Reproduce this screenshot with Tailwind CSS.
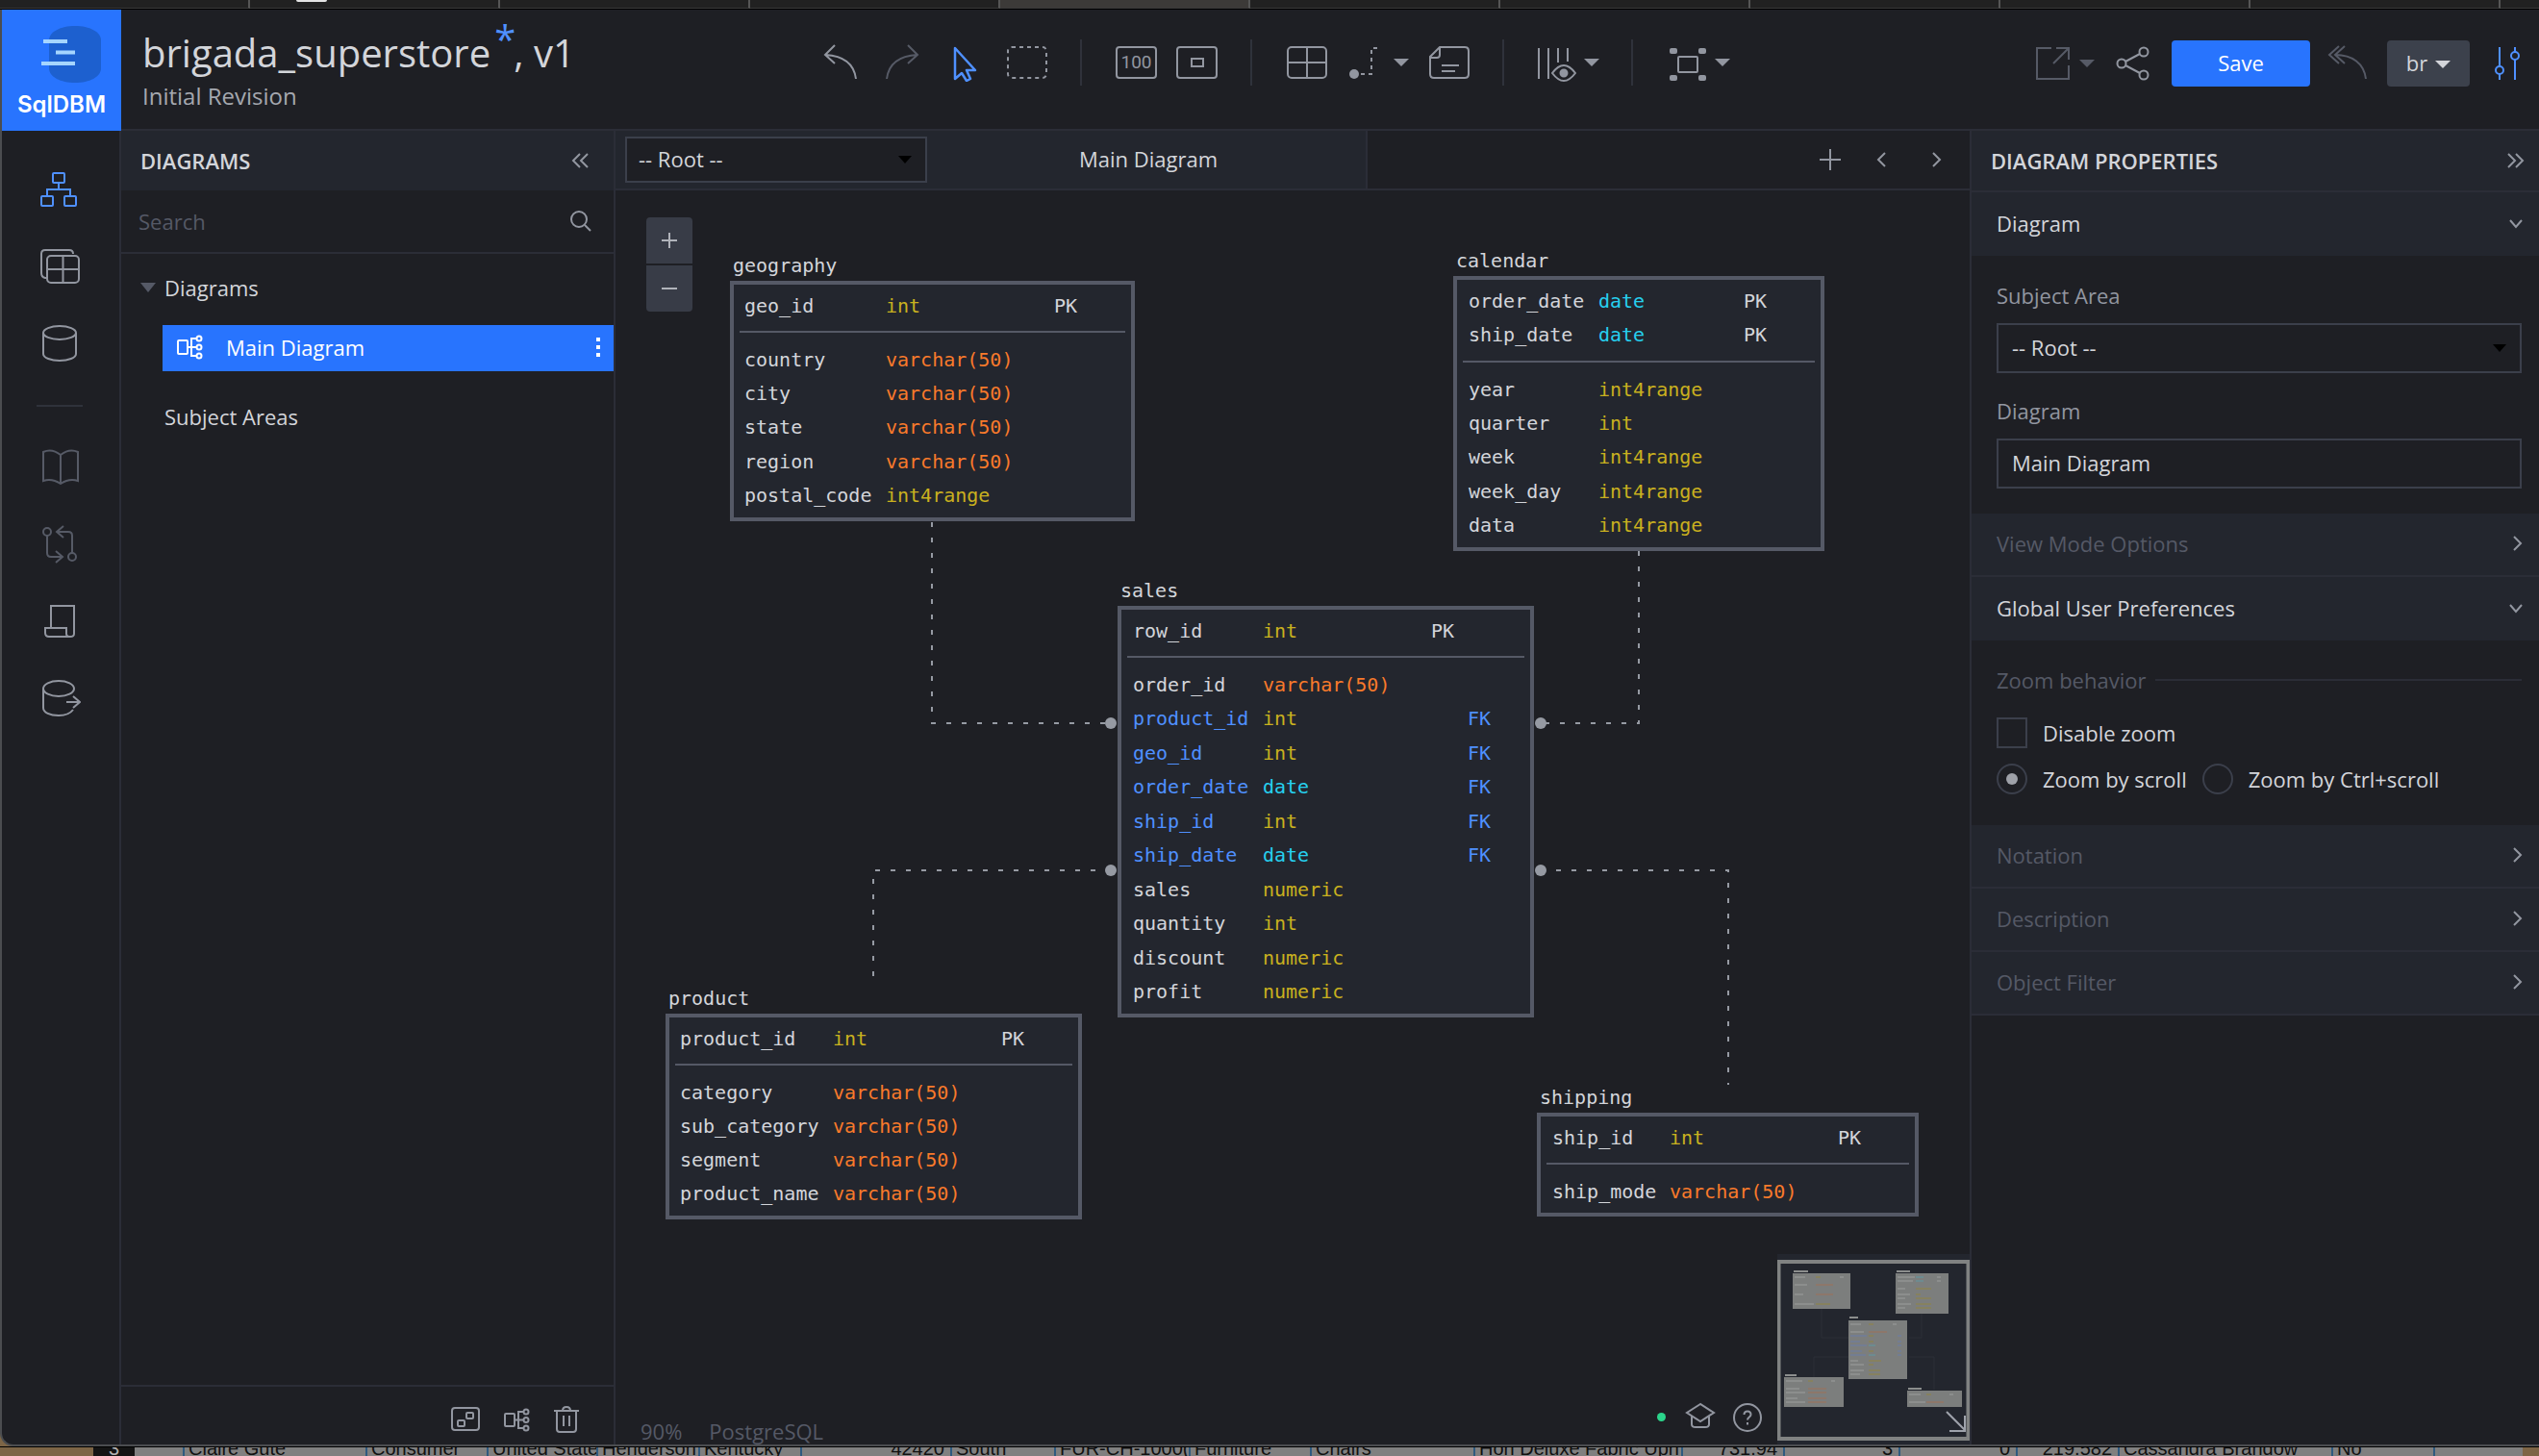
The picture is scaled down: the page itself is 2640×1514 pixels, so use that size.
<!DOCTYPE html>
<html lang="en">
<head>
<meta charset="utf-8">
<title>brigada_superstore - SqlDBM</title>
<script src="https://cdn.jsdelivr.net/npm/@tailwindcss/browser@4"></script>
</head>
<body class="bg-[#7d6546] text-[#d3d5da] font-['Open_Sans',sans-serif] text-[22px] leading-[30px]">
<div class="flex h-screen flex-col overflow-hidden">

  <!-- Browser tab edge -->
  <div class="flex h-[10px] shrink-0 overflow-hidden border-b border-black bg-[#212121]">
    <div class="w-[260px] shrink-0 border-r-2 border-b border-r-[#555] border-b-[#3a3a3a]"></div>
    <div class="w-[260px] shrink-0 border-r-2 border-b border-r-[#555] border-b-[#3a3a3a] pl-[48px]"><div class="h-[2px] w-8 rounded-b bg-[#e4e4e4]"></div></div>
    <div class="w-[260px] shrink-0 border-r-2 border-b border-r-[#555] border-b-[#3a3a3a]"></div>
    <div class="w-[260px] shrink-0 border-r-2 border-b border-r-[#555] border-b-[#3a3a3a]"></div>
    <div class="w-[260px] shrink-0 border-r-2 border-b border-r-[#555] border-b-[#3a3a3a] bg-[#3c3a38]"></div>
    <div class="w-[260px] shrink-0 border-r-2 border-b border-r-[#555] border-b-[#3a3a3a]"></div>
    <div class="w-[260px] shrink-0 border-r-2 border-b border-r-[#555] border-b-[#3a3a3a]"></div>
    <div class="w-[260px] shrink-0 border-r-2 border-b border-r-[#555] border-b-[#3a3a3a]"></div>
    <div class="w-[260px] shrink-0 border-r-2 border-b border-r-[#555] border-b-[#3a3a3a]"></div>
    <div class="w-[260px] shrink-0 border-r-2 border-b border-r-[#555] border-b-[#3a3a3a]"></div>
    <div class="flex-1 border-b border-b-[#3a3a3a]"></div>
  </div>

  <div class="flex min-h-0 flex-1 flex-col overflow-hidden rounded-bl-[14px] border-b-2 border-l-2 border-[#4b4d50] bg-[#1e1f24]">

    <!-- Header -->
    <header class="flex h-[126px] shrink-0">
      <a href="#" class="flex w-[124px] shrink-0 flex-col items-center bg-[#2874fe] text-white">
        <svg class="h-[84px] w-[124px]" viewBox="0 0 124 84" fill="none"><path d="M49 32c0-9 12-15 27-15s27 6 27 15v29c0 9-12 15-27 15s-27-6-27-15z" fill="#1d60cf"/><path d="M43 33h25M56 44.500h20M41 56h35" stroke="#a5d5ff" stroke-width="4"/></svg>
        <span class="font-['Inter',sans-serif] text-[24px] leading-[30px] font-semibold">SqlDBM</span>
      </a>
      <div class="flex min-w-0 flex-1 items-start border-b-2 border-[#2b2d37]">
        <div class="w-[726px] shrink-0 pt-4 pl-[22px]">
          <h1 class="text-[40px] leading-[58px] whitespace-nowrap">brigada_superstore<sup class="relative -top-[14px] -mr-[2px] ml-[4px] text-[40px] leading-none text-[#4f90ff]">*</sup>, v1</h1>
          <p class="text-[24px] leading-[32px] text-[#a5a8af]">Initial Revision</p>
        </div>
        <div class="flex h-[110px] items-center text-[#9296a0]">
          <button aria-label="Undo" class="mr-[26px]"><svg class="h-10 w-10" viewBox="0 0 40 40" fill="none" stroke="currentColor" stroke-width="2"><path d="M16 2 6 12 16 21M6 12c18 1 30 9 32 25"/></svg></button>
          <button aria-label="Redo" class="mr-[30px] text-[#565a66]"><svg class="h-10 w-10" viewBox="0 0 40 40" fill="none" stroke="currentColor" stroke-width="2"><path d="M26 2 36 12 26 21M36 12C18 13 6 21 4 37"/></svg></button>
          <button aria-label="Pointer" class="mr-[26px] text-[#4f90ff]"><svg class="h-10 w-8" viewBox="0 0 32 40" fill="none" stroke="currentColor" stroke-width="2.500" stroke-linejoin="round"><path d="M5 5v32l7-6 5 8 4-2-4-9h9z"/></svg></button>
          <button aria-label="Select area" class="mr-[33px]"><svg class="h-10 w-[44px]" viewBox="0 0 44 40" fill="none" stroke="currentColor" stroke-width="2" stroke-dasharray="4 4"><rect x="2" y="4" width="40" height="32" rx="4"/></svg></button>
          <span class="mr-[35px] h-12 w-[2px] bg-[#2f323b]"></span>
          <button aria-label="Zoom to 100" class="mr-5 flex h-[34px] w-[43px] items-center justify-center rounded-[4px] border-2 border-current font-['Roboto',sans-serif] text-[19px]">100</button>
          <button aria-label="Fit to screen" class="mr-[34px] flex h-[34px] w-[43px] items-center justify-center rounded-[4px] border-2 border-current"><span class="h-[10px] w-[14px] border-2 border-current"></span></button>
          <span class="mr-[35px] h-12 w-[2px] bg-[#2f323b]"></span>
          <button aria-label="Add table" class="mr-[20px]"><svg class="h-10 w-[44px]" viewBox="0 0 44 40" fill="none" stroke="currentColor" stroke-width="2"><rect x="2" y="4" width="40" height="32" rx="4"/><path d="M22 4v32M2 20h40"/></svg></button>
          <button aria-label="Add relationship" class="mr-5 flex items-center gap-3"><svg class="h-10 w-9" viewBox="0 0 36 40" fill="none"><circle cx="7" cy="32" r="5" fill="currentColor"/><path d="M14 32h11V5h10" stroke="currentColor" stroke-width="2" stroke-dasharray="4 4"/></svg><svg class="h-2 w-4" viewBox="0 0 16 8" fill="currentColor"><path d="M0 0h16l-8 8z"/></svg></button>
          <button aria-label="Add note" class="mr-[33px]"><svg class="h-10 w-[44px]" viewBox="0 0 44 40" fill="none" stroke="currentColor" stroke-width="2"><path d="M12 4h26q4 0 4 4v24q0 4-4 4H6q-4 0-4-4V14zM12 4v8q0 3-3 3H2M14 23h18M14 29h14"/></svg></button>
          <span class="mr-[35px] h-12 w-[2px] bg-[#2f323b]"></span>
          <button aria-label="View mode" class="mr-[33px] flex items-center gap-2"><svg class="h-10 w-10" viewBox="0 0 40 40" fill="none" stroke="currentColor" stroke-width="2"><path d="M1 5v32M11 5v32M21 5v15M31 5v14"/><path d="M15 31q6-8 12-8t12 8q-6 8-12 8t-12-8z"/><circle cx="27" cy="31" r="3.500" fill="currentColor"/></svg><svg class="h-2 w-4" viewBox="0 0 16 8" fill="currentColor"><path d="M0 0h16l-8 8z"/></svg></button>
          <span class="mr-[37px] h-12 w-[2px] bg-[#2f323b]"></span>
          <button aria-label="Layout" class="flex items-center gap-2"><svg class="h-10 w-10" viewBox="0 0 40 40" fill="none" stroke="currentColor" stroke-width="2"><rect x="10" y="14" width="20" height="16" rx="1"/><g fill="currentColor" stroke="none"><rect x="1" y="5" width="8" height="6" rx="2"/><rect x="31" y="5" width="8" height="6" rx="2"/><rect x="1" y="33" width="8" height="6" rx="2"/><rect x="31" y="33" width="8" height="6" rx="2"/></g></svg><svg class="h-2 w-4" viewBox="0 0 16 8" fill="currentColor"><path d="M0 0h16l-8 8z"/></svg></button>
        </div>
        <div class="ml-auto flex h-[112px] shrink-0 items-center pr-[18px] text-[#9296a0]">
          <button aria-label="Export" class="mr-[22px] flex items-center gap-2 text-[#565a66]"><svg class="h-10 w-[38px]" viewBox="0 0 38 40" fill="none" stroke="currentColor" stroke-width="2"><path d="M17 4H2v32h33V22M22 4h13v12M35 4 19 20"/></svg><svg class="h-2 w-4" viewBox="0 0 16 8" fill="currentColor"><path d="M0 0h16l-8 8z"/></svg></button>
          <button aria-label="Share" class="mr-[22px]"><svg class="h-10 w-9" viewBox="0 0 36 40" fill="none" stroke="currentColor" stroke-width="2"><circle cx="6" cy="20" r="4.500"/><circle cx="29" cy="8" r="4.500"/><circle cx="29" cy="32" r="4.500"/><path d="m10 18 15-8M10 22l15 8"/></svg></button>
          <button class="mr-[18px] h-12 w-[144px] rounded-[4px] bg-[#2874fe] pb-[2px] font-medium text-white">Save</button>
          <button aria-label="Revert" class="mr-[20px] text-[#565a66]"><svg class="h-10 w-[42px]" viewBox="0 0 42 40" fill="none" stroke="currentColor" stroke-width="2"><path d="M12 2 2 11l10 9M18 2 8 11l10 9M8 11c18 0 30 9 32 25"/></svg></button>
          <button class="mr-[24px] flex h-12 w-[86px] items-center justify-center gap-2 rounded-[4px] bg-[#3c414c] pb-[2px] text-[#d3d5da]">br <svg class="mt-1 h-2 w-4" viewBox="0 0 16 8" fill="currentColor"><path d="M0 0h16l-8 8z"/></svg></button>
          <button aria-label="Settings" class="text-[#4f90ff]"><svg class="h-10 w-[30px]" viewBox="0 0 30 40" fill="none" stroke="currentColor" stroke-width="2"><path d="M7 3v20M7 31v6M23 3v5M23 16v21"/><circle cx="7" cy="27" r="4"/><circle cx="23" cy="12" r="4"/></svg></button>
        </div>
      </div>
    </header>

    <div class="flex min-h-0 flex-1">

      <!-- Icon rail -->
      <nav class="flex w-[124px] shrink-0 flex-col items-center border-r-2 border-[#2b2d37] pt-[21px] pr-[2px] text-[#9296a0]">
        <button aria-label="Diagrams" class="flex h-20 items-center text-[#4f90ff]"><svg class="h-10 w-11" viewBox="0 0 44 40" fill="none" stroke="currentColor" stroke-width="2"><rect x="15" y="3" width="12" height="10" rx="1"/><rect x="3" y="27" width="12" height="10" rx="1"/><rect x="27" y="27" width="12" height="10" rx="1"/><path d="M21 13v7M9 27v-7h24v7"/></svg></button>
        <button aria-label="Tables" class="flex h-20 items-center"><svg class="h-10 w-11" viewBox="0 0 44 40" fill="none" stroke="currentColor" stroke-width="2"><path d="M9 32H7q-4-1-4-5V7q0-4 4-4h25q4 0 4 4"/><rect x="9" y="9" width="33" height="28" rx="4"/><path d="M25.500 9v28M9 23h33"/></svg></button>
        <button aria-label="Database" class="flex h-20 items-center"><svg class="h-10 w-11" viewBox="0 0 44 40" fill="none" stroke="currentColor" stroke-width="2"><ellipse cx="22" cy="9" rx="17" ry="7"/><path d="M5 9v22c0 4 8 7 17 7s17-3 17-7V9"/></svg></button>
        <span class="mt-6 mb-[23px] h-[2px] w-12 shrink-0 bg-[#2f323b]"></span>
        <button aria-label="Documentation" class="flex h-20 items-center text-[#565a66]"><svg class="h-10 w-11" viewBox="0 0 44 40" fill="none" stroke="currentColor" stroke-width="2"><path d="M23 7Q14 0 5 4v30q9-3 18 3 9-6 18-3V4q-9-4-18 3zv30"/></svg></button>
        <button aria-label="Compare" class="flex h-20 items-center text-[#565a66]"><svg class="h-10 w-11" viewBox="0 0 44 40" fill="none" stroke="currentColor" stroke-width="2"><circle cx="9" cy="7" r="4"/><circle cx="35" cy="33" r="4"/><path d="M9 11v18q0 4 4 4h12M18 27l7 6-7 6M35 29V11q0-4-4-4H19M26 1l-7 6 7 6"/></svg></button>
        <button aria-label="Scripts" class="flex h-20 items-center"><svg class="h-10 w-11" viewBox="0 0 44 40" fill="none" stroke="currentColor" stroke-width="2"><path d="M13 27V4h24v29q0 3-4 3H11q-4 0-4-4v-5h22v6q0 3 4 3"/></svg></button>
        <button aria-label="Export database" class="flex h-20 items-center"><svg class="h-10 w-11" viewBox="0 0 44 40" fill="none" stroke="currentColor" stroke-width="2"><ellipse cx="21" cy="10" rx="16" ry="8"/><path d="M5 10v20c0 5 7 8 16 8 7 0 12-2 15-6M29 24h14M36 18l7 6-7 6"/></svg></button>
      </nav>

      <!-- Diagrams panel -->
      <aside class="flex w-[514px] shrink-0 flex-col border-r-2 border-[#2b2d37]">
        <div class="flex h-[62px] shrink-0 items-center justify-between bg-[#23262e] pr-6 pl-5">
          <h2 class="font-semibold">DIAGRAMS</h2>
          <button aria-label="Collapse panel" class="text-[#9296a0]"><svg class="h-5 w-5" viewBox="0 0 20 20" fill="none" stroke="currentColor" stroke-width="2"><path d="m9 3-7 7 7 7M17 3l-7 7 7 7"/></svg></button>
        </div>
        <label class="flex h-[66px] shrink-0 items-center border-b-2 border-[#2b2d37] pr-[22px] pl-[18px] text-[#9296a0]">
          <input type="text" aria-label="Search" placeholder="Search" class="min-w-0 flex-1 bg-transparent placeholder:text-[#555966]">
          <svg class="h-6 w-6" viewBox="0 0 24 24" fill="none" stroke="currentColor" stroke-width="2"><circle cx="10" cy="10" r="8"/><path d="m16 16 6 6"/></svg>
        </label>
        <div class="flex min-h-0 flex-1 flex-col pt-[10px]">
          <div class="flex h-[50px] items-center gap-[9px] pl-5"><svg class="h-[10px] w-4" viewBox="0 0 16 10" fill="#555966"><path d="M0 0h16l-8 10z"/></svg>Diagrams</div>
          <a href="#" class="mt-[14px] ml-[43px] flex h-12 items-center bg-[#2874fe] pr-3 pb-[2px] pl-[14px] text-white">
            <svg class="mr-6 h-7 w-7" viewBox="0 0 28 28" fill="none" stroke="currentColor" stroke-width="2"><rect x="2" y="7" width="10" height="14" rx="1"/><path d="M12 14h9M21 5h-5v18h5"/><circle cx="24" cy="5" r="2.500"/><circle cx="24" cy="14" r="2.500"/><circle cx="24" cy="23" r="2.500"/></svg>
            Main Diagram
            <svg class="ml-auto h-6 w-2" viewBox="0 0 8 24" fill="currentColor"><path d="M2 2h4v4H2zM2 10h4v4H2zM2 18h4v4H2z"/></svg>
          </a>
          <div class="mt-[22px] flex h-[50px] items-center pl-[45px]">Subject Areas</div>
        </div>
        <div class="flex h-[62px] shrink-0 items-center justify-end gap-[24px] border-t-2 border-[#2b2d37] pt-2 pr-[35px] text-[#9296a0]">
          <button aria-label="Show on diagram"><svg class="h-8 w-[30px]" viewBox="0 0 30 32" fill="none" stroke="currentColor" stroke-width="2"><rect x="1" y="4" width="28" height="23" rx="3"/><rect x="7" y="17" width="7" height="6" rx="1"/><rect x="16" y="9" width="7" height="6" rx="1"/></svg></button>
          <button aria-label="Add diagram"><svg class="h-8 w-7" viewBox="0 0 28 32" fill="none" stroke="currentColor" stroke-width="2"><rect x="2" y="10" width="10" height="13" rx="1"/><path d="M12 16.500h9M21 8h-5v17h5"/><circle cx="24" cy="8" r="2.500"/><circle cx="24" cy="16.500" r="2.500"/><circle cx="24" cy="25" r="2.500"/></svg></button>
          <button aria-label="Delete"><svg class="h-8 w-7" viewBox="0 0 28 32" fill="none" stroke="currentColor" stroke-width="2"><path d="M1 7h26M4 7v19q0 3 3 3h14q3 0 3-3V7M10 7q0-4 4-4t4 4M11 12v11M17 12v11"/></svg></button>
        </div>
      </aside>

      <!-- Diagram workspace -->
      <main class="flex min-w-0 flex-1 flex-col">
        <div class="flex h-[62px] shrink-0 items-center border-b-2 border-[#2b2d37]">
          <div class="flex h-full w-[782px] items-center border-r-2 border-[#2b2d37] bg-[#23262e] pl-[10px]">
            <div class="relative w-[314px] shrink-0">
              <select aria-label="Subject area" class="block h-12 w-full appearance-none border-2 border-[#3b3f4b] bg-[#1e1f24] pb-[2px] pl-3"><option>-- Root --</option></select>
              <svg class="pointer-events-none absolute top-5 right-4 h-2 w-[14px]" viewBox="0 0 14 8"><path d="M0 0h14l-7 8z"/></svg>
            </div>
            <a href="#" class="flex-1 pb-[2px] pl-1 text-center">Main Diagram</a>
          </div>
          <div class="ml-auto flex items-center pr-[24px] text-[#9296a0]">
            <button aria-label="Add diagram tab" class="mr-[31px]"><svg class="h-6 w-6" viewBox="0 0 24 24" fill="none" stroke="currentColor" stroke-width="2"><path d="M12 1v22M1 12h22"/></svg></button>
            <button aria-label="Previous tab" class="mr-[38px]"><svg class="h-5 w-5" viewBox="0 0 20 20" fill="none" stroke="currentColor" stroke-width="2"><path d="m14 3-7 7 7 7"/></svg></button>
            <button aria-label="Next tab"><svg class="h-5 w-5" viewBox="0 0 20 20" fill="none" stroke="currentColor" stroke-width="2"><path d="m6 3 7 7-7 7"/></svg></button>
          </div>
        </div>

        <div class="relative min-h-0 flex-1 overflow-hidden">
          <svg class="absolute inset-0 h-full w-full" fill="none" stroke="#969aa3" stroke-width="2">
            <g stroke-dasharray="5 11"><path d="M329 345V554H515"/><path d="M1064 375V554H962"/><path d="M515 707H268V824"/><path d="M962 707H1157V930"/></g>
            <g fill="#969aa3" stroke="none"><circle cx="515" cy="554" r="6"/><circle cx="962" cy="554" r="6"/><circle cx="515" cy="707" r="6"/><circle cx="962" cy="707" r="6"/></g>
          </svg>

          <div class="absolute top-[28px] left-[32px] flex w-12 flex-col gap-[2px] text-[#b0b3ba]">
            <button aria-label="Zoom in" class="flex h-12 items-center justify-center rounded-t-[4px] bg-[#383c47]"><svg class="h-5 w-5" viewBox="0 0 20 20" fill="none" stroke="currentColor" stroke-width="2"><path d="M10 2v16M2 10h16"/></svg></button>
            <button aria-label="Zoom out" class="flex h-12 items-center justify-center rounded-b-[4px] bg-[#383c47]"><svg class="h-5 w-5" viewBox="0 0 20 20" fill="none" stroke="currentColor" stroke-width="2"><path d="M2 10h16"/></svg></button>
          </div>

          <section class="absolute top-[64px] left-[119px] w-[421px] font-['DejaVu_Sans_Mono',monospace] text-[20px] leading-5">
            <h3 class="h-[30px] pl-[3px] leading-[28px]">geography</h3>
            <div class="border-4 border-[#555966] bg-[#23262e] px-[6px] pt-1 pb-[5px]">
              <table class="h-[35px] w-full table-fixed text-left"><colgroup><col class="w-[152px]"><col class="w-[175px]"><col></colgroup>
                <tr><td class="pl-[5px]">geo_id</td><td class="text-[#c9b01f]">int</td><td>PK</td></tr>
              </table>
              <hr class="mt-[9px] mb-[10px] border-t-2 border-[#555966]">
              <table class="h-[177px] w-full table-fixed text-left"><colgroup><col class="w-[152px]"><col class="w-[175px]"><col></colgroup>
                <tr><td class="pl-[5px]">country</td><td class="text-[#f97a2b]">varchar(50)</td><td></td></tr>
                <tr><td class="pl-[5px]">city</td><td class="text-[#f97a2b]">varchar(50)</td><td></td></tr>
                <tr><td class="pl-[5px]">state</td><td class="text-[#f97a2b]">varchar(50)</td><td></td></tr>
                <tr><td class="pl-[5px]">region</td><td class="text-[#f97a2b]">varchar(50)</td><td></td></tr>
                <tr><td class="pl-[5px]">postal_code</td><td class="text-[#c9b01f]">int4range</td><td></td></tr>
              </table>
            </div>
          </section>

          <section class="absolute top-[59px] left-[871px] w-[386px] font-['DejaVu_Sans_Mono',monospace] text-[20px] leading-5">
            <h3 class="h-[30px] pl-[3px] leading-[28px]">calendar</h3>
            <div class="border-4 border-[#555966] bg-[#23262e] px-[6px] pt-1 pb-[5px]">
              <table class="h-[71px] w-full table-fixed text-left"><colgroup><col class="w-[141px]"><col class="w-[151px]"><col></colgroup>
                <tr><td class="pl-[6px]">order_date</td><td class="text-[#26d0ee]">date</td><td>PK</td></tr>
                <tr><td class="pl-[6px]">ship_date</td><td class="text-[#26d0ee]">date</td><td>PK</td></tr>
              </table>
              <hr class="mt-[9px] mb-[10px] border-t-2 border-[#555966]">
              <table class="h-[177px] w-full table-fixed text-left"><colgroup><col class="w-[141px]"><col class="w-[151px]"><col></colgroup>
                <tr><td class="pl-[6px]">year</td><td class="text-[#c9b01f]">int4range</td><td></td></tr>
                <tr><td class="pl-[6px]">quarter</td><td class="text-[#c9b01f]">int</td><td></td></tr>
                <tr><td class="pl-[6px]">week</td><td class="text-[#c9b01f]">int4range</td><td></td></tr>
                <tr><td class="pl-[6px]">week_day</td><td class="text-[#c9b01f]">int4range</td><td></td></tr>
                <tr><td class="pl-[6px]">data</td><td class="text-[#c9b01f]">int4range</td><td></td></tr>
              </table>
            </div>
          </section>

          <section class="absolute top-[402px] left-[522px] w-[433px] font-['DejaVu_Sans_Mono',monospace] text-[20px] leading-5">
            <h3 class="h-[30px] pl-[3px] leading-[28px]">sales</h3>
            <div class="border-4 border-[#555966] bg-[#23262e] px-[6px] pt-1 pb-[5px]">
              <table class="h-[35px] w-full table-fixed text-left"><colgroup><col class="w-[141px]"><col class="w-[175px]"><col></colgroup>
                <tr><td class="pl-[6px]">row_id</td><td class="text-[#c9b01f]">int</td><td>PK</td></tr>
              </table>
              <hr class="mt-[9px] mb-[10px] border-t-2 border-[#555966]">
              <table class="h-[355px] w-full table-fixed text-left"><colgroup><col class="w-[141px]"><col class="w-[213px]"><col></colgroup>
                <tr><td class="pl-[6px]">order_id</td><td class="text-[#f97a2b]">varchar(50)</td><td></td></tr>
                <tr class="text-[#4f90ff]"><td class="pl-[6px]">product_id</td><td class="text-[#c9b01f]">int</td><td>FK</td></tr>
                <tr class="text-[#4f90ff]"><td class="pl-[6px]">geo_id</td><td class="text-[#c9b01f]">int</td><td>FK</td></tr>
                <tr class="text-[#4f90ff]"><td class="pl-[6px]">order_date</td><td class="text-[#26d0ee]">date</td><td>FK</td></tr>
                <tr class="text-[#4f90ff]"><td class="pl-[6px]">ship_id</td><td class="text-[#c9b01f]">int</td><td>FK</td></tr>
                <tr class="text-[#4f90ff]"><td class="pl-[6px]">ship_date</td><td class="text-[#26d0ee]">date</td><td>FK</td></tr>
                <tr><td class="pl-[6px]">sales</td><td class="text-[#c9b01f]">numeric</td><td></td></tr>
                <tr><td class="pl-[6px]">quantity</td><td class="text-[#c9b01f]">int</td><td></td></tr>
                <tr><td class="pl-[6px]">discount</td><td class="text-[#c9b01f]">numeric</td><td></td></tr>
                <tr><td class="pl-[6px]">profit</td><td class="text-[#c9b01f]">numeric</td><td></td></tr>
              </table>
            </div>
          </section>

          <section class="absolute top-[826px] left-[52px] w-[433px] font-['DejaVu_Sans_Mono',monospace] text-[20px] leading-5">
            <h3 class="h-[30px] pl-[3px] leading-[28px]">product</h3>
            <div class="border-4 border-[#555966] bg-[#23262e] px-[6px] pt-1 pb-[5px]">
              <table class="h-[35px] w-full table-fixed text-left"><colgroup><col class="w-[164px]"><col class="w-[175px]"><col></colgroup>
                <tr><td class="pl-[5px]">product_id</td><td class="text-[#c9b01f]">int</td><td>PK</td></tr>
              </table>
              <hr class="mt-[9px] mb-[10px] border-t-2 border-[#555966]">
              <table class="h-[141px] w-full table-fixed text-left"><colgroup><col class="w-[164px]"><col class="w-[175px]"><col></colgroup>
                <tr><td class="pl-[5px]">category</td><td class="text-[#f97a2b]">varchar(50)</td><td></td></tr>
                <tr><td class="pl-[5px]">sub_category</td><td class="text-[#f97a2b]">varchar(50)</td><td></td></tr>
                <tr><td class="pl-[5px]">segment</td><td class="text-[#f97a2b]">varchar(50)</td><td></td></tr>
                <tr><td class="pl-[5px]">product_name</td><td class="text-[#f97a2b]">varchar(50)</td><td></td></tr>
              </table>
            </div>
          </section>

          <section class="absolute top-[929px] left-[958px] w-[397px] font-['DejaVu_Sans_Mono',monospace] text-[20px] leading-5">
            <h3 class="h-[30px] pl-[3px] leading-[28px]">shipping</h3>
            <div class="border-4 border-[#555966] bg-[#23262e] px-[6px] pt-1 pb-[5px]">
              <table class="h-[35px] w-full table-fixed text-left"><colgroup><col class="w-[128px]"><col class="w-[175px]"><col></colgroup>
                <tr><td class="pl-[6px]">ship_id</td><td class="text-[#c9b01f]">int</td><td>PK</td></tr>
              </table>
              <hr class="mt-[9px] mb-[10px] border-t-2 border-[#555966]">
              <table class="h-[35px] w-full table-fixed text-left"><colgroup><col class="w-[128px]"><col class="w-[175px]"><col></colgroup>
                <tr><td class="pl-[6px]">ship_mode</td><td class="text-[#f97a2b]">varchar(50)</td><td></td></tr>
              </table>
            </div>
          </section>

          <div class="absolute bottom-0 left-[26px] flex h-7 gap-7 leading-7 text-[#555966]"><span>90%</span><span>PostgreSQL</span></div>

          <!-- Status icons and minimap -->
          <div class="absolute right-0 bottom-0 flex items-end text-[#9296a0]">
            <span class="mr-[20px] mb-6 h-[9px] w-[9px] rounded-full bg-[#2bd48b]"></span>
            <button aria-label="Learn" class="mr-[17px] mb-[12px]"><svg class="h-8 w-8" viewBox="0 0 32 32" fill="none" stroke="currentColor" stroke-width="2"><path d="M16 2 2 11l14 9 14-9zM7 14v9q0 3 4 3h10q4 0 4-3v-9"/></svg></button>
            <button aria-label="Help" class="mr-[15px] mb-[12px]"><svg class="h-8 w-8" viewBox="0 0 32 32" fill="none" stroke="currentColor" stroke-width="2"><circle cx="16" cy="16" r="14"/><path d="M12.500 13q0-3.500 3.500-3.500t3.500 3.500c0 2.500-3.500 2.500-3.500 5.500M16 21v2.500"/></svg></button>
            <div class="relative h-[198px] w-[200px] bg-[#23262e] pt-[6px] pb-1">
              <svg class="h-[188px] w-[200px]" viewBox="0 0 200 188" fill="none">
                <rect x="1.500" y="2" width="197" height="184" stroke="#808282" stroke-width="4"/>
                <path d="M46 51v30h28M150 56v25h-13M38 128v-27h36M137 101h26v34" stroke="#2c2f36"/>
                <g fill="#7c7e7d"><rect x="16" y="14" width="60" height="37"/><rect x="123" y="14" width="55" height="42"/><rect x="74" y="63" width="61" height="61"/><rect x="7" y="122" width="62" height="31"/><rect x="135" y="136" width="57" height="17"/></g>
                <path d="M17 12h15M124 12h14M75 60h9M8 120h12M136 134h14M18 18h11M65 18h4M18 26h13M18 36h9M18 46h20M125 18h18M166 18h4M125 22h16M166 22h4M125 30h8M125 36h13M125 40h8M125 46h14M125 50h8M76 67h11M120 67h4M76 75h14M76 105h8M76 109h14M76 115h14M76 119h10M9 126h17M56 126h4M9 134h14M9 138h20M9 144h12M9 148h20M137 140h12M179 140h4M137 148h17" stroke="#8c8e8d" stroke-width="2"/>
                <path d="M40 26h18M40 36h18M95 75h19M32 134h19M32 138h19M32 144h19M32 148h19M155 148h18" stroke="#8d776a" stroke-width="2"/>
                <path d="M40 18h5M40 46h15M144 30h16M144 36h5M144 40h16M144 46h16M144 50h16M95 67h5M95 79h5M95 85h5M95 95h5M95 105h13M95 109h5M95 115h12M95 119h12M32 126h5M155 140h5" stroke="#86815f" stroke-width="2"/>
                <path d="M144 18h8M144 22h8M95 89h7M95 99h7" stroke="#6d8b90" stroke-width="2"/>
                <path d="M76 79h17M76 85h10M76 89h17M76 95h12M76 99h16M125 79h4M125 85h4M125 89h4M125 95h4M125 99h4" stroke="#737d92" stroke-width="2"/>
                <path d="m176 158 19 19M195 162v16h-16" stroke="#9ea2ab" stroke-width="2"/>
              </svg>
            </div>
          </div>
        </div>
      </main>

      <!-- Properties panel -->
      <aside class="flex w-[592px] shrink-0 flex-col border-l-2 border-[#2b2d37]">
        <div class="flex h-16 shrink-0 items-center justify-between border-b-2 border-[#2b2d37] bg-[#23262e] pr-[15px] pl-5">
          <h2 class="font-semibold">DIAGRAM PROPERTIES</h2>
          <button aria-label="Collapse properties" class="text-[#9296a0]"><svg class="h-5 w-5" viewBox="0 0 20 20" fill="none" stroke="currentColor" stroke-width="2"><path d="m3 3 7 7-7 7M11 3l7 7-7 7"/></svg></button>
        </div>
        <button class="flex h-[66px] shrink-0 items-center justify-between bg-[#23262e] pr-[14px] pb-[3px] pl-[26px]">Diagram<svg class="h-5 w-5 text-[#9296a0]" viewBox="0 0 20 20" fill="none" stroke="currentColor" stroke-width="2"><path d="m4 7 6 7 6-7"/></svg></button>
        <div class="flex h-[268px] shrink-0 flex-col pt-[26px] pr-[18px] pl-[26px]">
          <label for="area" class="h-11 text-[#9296a0]">Subject Area</label>
          <div class="relative">
            <select id="area" class="block h-[52px] w-full appearance-none border-2 border-[#3b3f4b] bg-[#1e1f24] pb-[2px] pl-[14px]"><option>-- Root --</option></select>
            <svg class="pointer-events-none absolute top-[22px] right-4 h-2 w-[14px]" viewBox="0 0 14 8"><path d="M0 0h14l-7 8z"/></svg>
          </div>
          <label for="name" class="mt-6 h-11 text-[#9296a0]">Diagram</label>
          <input id="name" type="text" value="Main Diagram" class="h-[52px] w-full border-2 border-[#3b3f4b] bg-transparent px-[14px] pb-[2px]">
        </div>
        <button class="flex h-[66px] shrink-0 items-center justify-between border-b-2 border-[#2b2d37] bg-[#23262e] pr-[14px] pb-[2px] pl-[26px] text-[#555966]">View Mode Options<svg class="h-5 w-5 text-[#9296a0]" viewBox="0 0 20 20" fill="none" stroke="currentColor" stroke-width="2"><path d="m8 3 7 7-7 7"/></svg></button>
        <button class="flex h-[66px] shrink-0 items-center justify-between bg-[#23262e] pr-[14px] pb-[3px] pl-[26px]">Global User Preferences<svg class="h-5 w-5 text-[#9296a0]" viewBox="0 0 20 20" fill="none" stroke="currentColor" stroke-width="2"><path d="m4 7 6 7 6-7"/></svg></button>
        <fieldset class="h-[192px] shrink-0 pt-[26px] pr-[18px] pl-[26px]">
          <div class="flex items-center gap-[10px] text-[#555966]">Zoom behavior<span class="h-[2px] flex-1 bg-[#2b2d37]"></span></div>
          <label class="mt-[24px] flex h-8 items-center gap-4 leading-7"><input type="checkbox" class="h-8 w-8 appearance-none border-2 border-[#3b3f4b] checked:bg-[#9296a0]">Disable zoom</label>
          <div class="mt-4 flex gap-4">
            <label class="flex h-8 items-center gap-4"><input type="radio" name="zoom" checked class="h-8 w-8 appearance-none rounded-full border-2 border-[#3b3f4b] bg-clip-content p-2 checked:bg-[#9ea1a8]">Zoom by scroll</label>
            <label class="flex h-8 items-center gap-4"><input type="radio" name="zoom" class="h-8 w-8 appearance-none rounded-full border-2 border-[#3b3f4b] bg-clip-content p-2 checked:bg-[#9ea1a8]">Zoom by Ctrl+scroll</label>
          </div>
        </fieldset>
        <button class="flex h-[66px] shrink-0 items-center justify-between border-b-2 border-[#2b2d37] bg-[#23262e] pr-[14px] pb-[2px] pl-[26px] text-[#555966]">Notation<svg class="h-5 w-5 text-[#9296a0]" viewBox="0 0 20 20" fill="none" stroke="currentColor" stroke-width="2"><path d="m8 3 7 7-7 7"/></svg></button>
        <button class="flex h-[66px] shrink-0 items-center justify-between border-b-2 border-[#2b2d37] bg-[#23262e] pr-[14px] pb-[2px] pl-[26px] text-[#555966]">Description<svg class="h-5 w-5 text-[#9296a0]" viewBox="0 0 20 20" fill="none" stroke="currentColor" stroke-width="2"><path d="m8 3 7 7-7 7"/></svg></button>
        <button class="flex h-[66px] shrink-0 items-center justify-between border-b-2 border-[#2b2d37] bg-[#23262e] pr-[14px] pb-[2px] pl-[26px] text-[#555966]">Object Filter<svg class="h-5 w-5 text-[#9296a0]" viewBox="0 0 20 20" fill="none" stroke="currentColor" stroke-width="2"><path d="m8 3 7 7-7 7"/></svg></button>
      </aside>
    </div>
  </div>

  <!-- Spreadsheet behind the window -->
  <div class="flex h-[10px] shrink-0 items-start overflow-hidden border-t border-black pr-[17px] pl-[97px] font-['Liberation_Sans',sans-serif] text-[20px] leading-[22px] text-[#111]">
    <table class="-mt-[10px] w-full table-fixed bg-[#808080]">
      <colgroup><col class="w-[43px]"><col class="w-[51px]"><col class="w-[190px]"><col class="w-[126px]"><col class="w-[114px]"><col class="w-[106px]"><col class="w-[106px]"><col class="w-[156px]"><col class="w-[108px]"><col class="w-[140px]"><col class="w-[126px]"><col class="w-[170px]"><col class="w-[216px]"><col class="w-[106px]"><col class="w-[120px]"><col class="w-[122px]"><col class="w-[106px]"><col class="w-[222px]"><col class="w-[106px]"><col></colgroup>
      <tr class="whitespace-nowrap">
        <td class="bg-[#141414] text-center text-[#b0b0b0]">3</td>
        <td class="border-r-2 border-[#2f5a80]"></td>
        <td class="border-r-2 border-[#2f5a80] pl-1">Claire Gute</td>
        <td class="border-r-2 border-[#2f5a80] pl-1">Consumer</td>
        <td class="overflow-hidden border-r-2 border-[#2f5a80] pl-1">United State</td>
        <td class="overflow-hidden border-r-2 border-[#2f5a80] pl-1">Henderson</td>
        <td class="overflow-hidden border-r-2 border-[#2f5a80] pl-1">Kentucky</td>
        <td class="border-r-2 border-[#2f5a80] pr-[6px] text-right">42420</td>
        <td class="border-r-2 border-[#2f5a80] pl-1">South</td>
        <td class="overflow-hidden border-r-2 border-[#2f5a80] pl-1">FUR-CH-1000(</td>
        <td class="border-r-2 border-[#2f5a80] pl-1">Furniture</td>
        <td class="border-r-2 border-[#2f5a80] pl-1">Chairs</td>
        <td class="overflow-hidden border-r-2 border-[#2f5a80] pl-1">Hon Deluxe Fabric Uph</td>
        <td class="border-r-2 border-[#2f5a80] pr-[6px] text-right">731.94</td>
        <td class="border-r-2 border-[#2f5a80] pr-[6px] text-right">3</td>
        <td class="border-r-2 border-[#2f5a80] pr-[6px] text-right">0</td>
        <td class="border-r-2 border-[#2f5a80] pr-[6px] text-right">219.582</td>
        <td class="border-r-2 border-[#2f5a80] pl-1">Cassandra Brandow</td>
        <td class="border-r-2 border-[#2f5a80] pl-1">No</td>
        <td></td>
      </tr>
    </table>
  </div>
</div>
</body>
</html>
